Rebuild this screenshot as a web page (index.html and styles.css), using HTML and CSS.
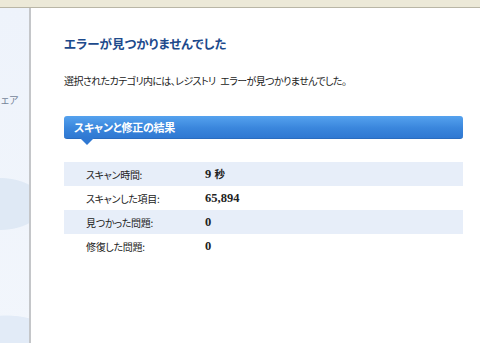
FILE: index.html
```html
<!DOCTYPE html>
<html lang="ja">
<head>
  <meta charset="utf-8">
  <title>スキャン結果</title>
  <link rel="stylesheet" href="styles.css">
</head>
<body>
  <div class="topbar"></div>

  <div class="frame">
    <aside class="sidebar">
      <div class="side-item">ェア</div>
    </aside>

    <main class="main">
      <h2 class="title">エラーが見つかりませんでした</h2>
      <p class="message">選択されたカテゴリ内には、レジストリ エラーが見つかりませんでした。</p>

      <div class="section-head">スキャンと修正の結果</div>

      <table class="results">
        <tbody>
          <tr><td class="label">スキャン時間:</td><td class="value">9 <span class="unit">秒</span></td></tr>
          <tr><td class="label">スキャンした項目:</td><td class="value">65,894</td></tr>
          <tr><td class="label">見つかった問題:</td><td class="value">0</td></tr>
          <tr><td class="label">修復した問題:</td><td class="value">0</td></tr>
        </tbody>
      </table>
    </main>
  </div>
</body>
</html>
```

FILE: styles.css
```css
body {
  font-family: "Noto Sans CJK JP", "Noto Sans", sans-serif;
  font-feature-settings: "palt";
  margin: 0;
  background: #ffffff;
  color: #222;
  font-size: 10px;
  overflow: hidden;
}

.topbar {
  height: 7px;
  background: #ece9d8;
  border-bottom: 1px solid #b9b6a6;
}

.frame {
  display: flex;
  height: 335px;
}

.sidebar {
  width: 29px;
  flex-shrink: 0;
  overflow: hidden;
  border-right: 2px solid #c4c6c9;
  background:
    radial-gradient(ellipse 50px 30px at 0 196px, #dfe9f5 85%, transparent 88%),
    radial-gradient(ellipse 55px 26px at 6px 330px, #e2ebf7 85%, transparent 88%),
    linear-gradient(#eef3fb, #f2f6fc);
}

.side-item {
  margin-top: 84px;
  padding-left: 1px;
  white-space: nowrap;
  color: #76859a;
  font-size: 10px;
  line-height: 16px;
}

.main {
  flex: 1;
  padding: 28px 17px 0 33px;
}

.title {
  margin: 0;
  font-size: 12.5px;
  line-height: 16px;
  color: #1d4a8c;
  font-weight: bold;
}

.message {
  margin: 21px 0 0;
  line-height: 16px;
  letter-spacing: -0.6px;
  word-spacing: 3px;
}

.section-head {
  position: relative;
  margin-top: 27px;
  height: 23px;
  line-height: 22px;
  padding-left: 10px;
  border-radius: 3px;
  background: linear-gradient(#55a2ee, #3a86dc 55%, #2f78d2);
  border-bottom: 1px solid #2a6cbf;
  box-sizing: border-box;
  color: #ffffff;
  font-weight: bold;
  font-size: 11px;
  letter-spacing: -0.3px;
}

.section-head::after {
  content: "";
  position: absolute;
  left: 16px;
  top: 22px;
  border-left: 7px solid transparent;
  border-right: 7px solid transparent;
  border-top: 7px solid #2f78d2;
}

.results {
  width: 100%;
  margin-top: 23px;
  border-collapse: collapse;
}

.results td {
  height: 24px;
  padding: 0;
}

.results tr:nth-child(odd) {
  background-color: #e7eef9;
}

.label {
  width: 119px;
  padding-left: 22px !important;
  letter-spacing: -0.3px;
}

.value {
  font-family: "Liberation Serif", "Noto Sans CJK JP", serif;
  font-weight: bold;
  font-size: 12.5px;
}

.unit {
  font-family: "Noto Sans CJK JP", sans-serif;
  font-size: 10.5px;
}
```
